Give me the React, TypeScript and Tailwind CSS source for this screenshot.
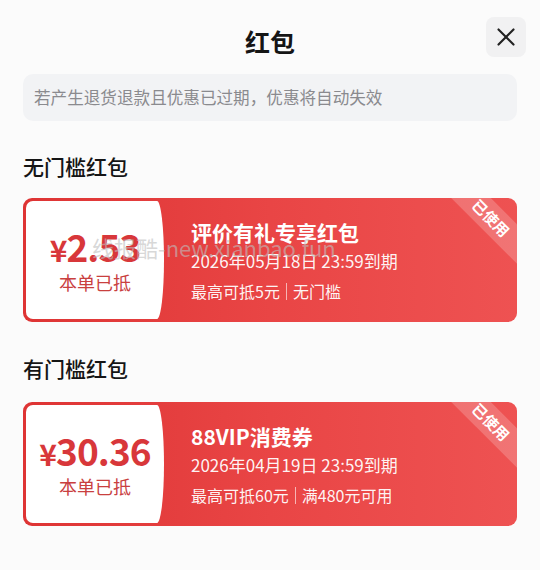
import React from 'react';
import { X } from 'lucide-react';

interface CouponProps {
  amount: string;
  title: string;
  expire: string;
  limit: string;
  rule: string;
}

const Coupon: React.FC<CouponProps> = ({ amount, title, expire, limit, rule }) => {
  return (
    <div className="relative flex h-[124px] overflow-hidden rounded-[9px] bg-gradient-to-r from-[#de3434] via-[#e94545] to-[#ee5252] py-[3px] pl-[3px]">
      {/* Left: amount panel */}
      <div className="flex w-[138px] flex-shrink-0 flex-col items-center justify-center rounded-l-[7px] rounded-r-[7px_50%] bg-white">
        <div className="text-[37px] font-bold leading-[40px] tracking-tight text-[#d8373a]">
          <span className="text-[30px]">¥</span>
          {amount}
        </div>
        <div className="mt-[1px] text-[18px] leading-[24px] text-[#c9403f]">本单已抵</div>
      </div>

      {/* Right: details */}
      <div className="flex flex-col justify-center pl-[27px] text-white">
        <div className="text-[21px] font-bold leading-[28px]">{title}</div>
        <div className="mt-[3px] text-[17px] leading-[24px] text-white/95">{expire}</div>
        <div className="mt-[7px] flex items-center text-[16px] leading-[22px] text-white/95">
          <span>{limit}</span>
          <span className="mx-[6px] h-[17px] w-px bg-white/60" />
          <span>{rule}</span>
        </div>
      </div>

      {/* Used ribbon */}
      <div className="absolute right-[-36px] top-[6px] flex h-[28px] w-[124px] rotate-45 items-center justify-center bg-white/20 text-[15px] font-bold text-white">
        已使用
      </div>
    </div>
  );
};

export default function App() {
  return (
    <div
      className="relative h-[570px] w-[540px] overflow-hidden bg-[#fbfbfb] text-[#151515]"
      style={{ fontFamily: '"Noto Sans CJK SC", "Noto Sans", sans-serif' }}
    >
      {/* Header */}
      <div className="flex items-center justify-between px-[14px] pt-[17px]">
        <div className="h-10 w-10" />
        <h1 className="mt-[7px] text-[25px] font-bold leading-[32px]">红包</h1>
        <button className="flex h-10 w-10 items-center justify-center rounded-[8px] bg-[#f1f1f2]" aria-label="关闭">
          <X className="h-[30px] w-[30px] text-[#222]" strokeWidth={1.7} />
        </button>
      </div>

      <div className="px-[23px]">
        <div className="mt-[17px] flex h-[47px] items-center rounded-[10px] bg-[#f2f3f5] pl-[11px] text-[16.6px] text-[#8a8a8e]">
          若产生退货退款且优惠已过期，优惠将自动失效
        </div>

        <h2 className="mt-[31px] text-[21px] font-medium leading-[28px]">无门槛红包</h2>
        <div className="mt-[18px]">
          <Coupon
            amount="2.53"
            title="评价有礼专享红包"
            expire="2026年05月18日 23:59到期"
            limit="最高可抵5元"
            rule="无门槛"
          />
        </div>

        <h2 className="mt-[32px] text-[21px] font-medium leading-[28px]">有门槛红包</h2>
        <div className="mt-[20px]">
          <Coupon
            amount="30.36"
            title="88VIP消费券"
            expire="2026年04月19日 23:59到期"
            limit="最高可抵60元"
            rule="满480元可用"
          />
        </div>
      </div>

      {/* Watermark */}
      <div className="pointer-events-none absolute left-[92px] top-[231px] text-[22px] text-[rgba(190,190,190,0.6)]">
        线报酷-new.xianbao.fun
      </div>
    </div>
  );
}
